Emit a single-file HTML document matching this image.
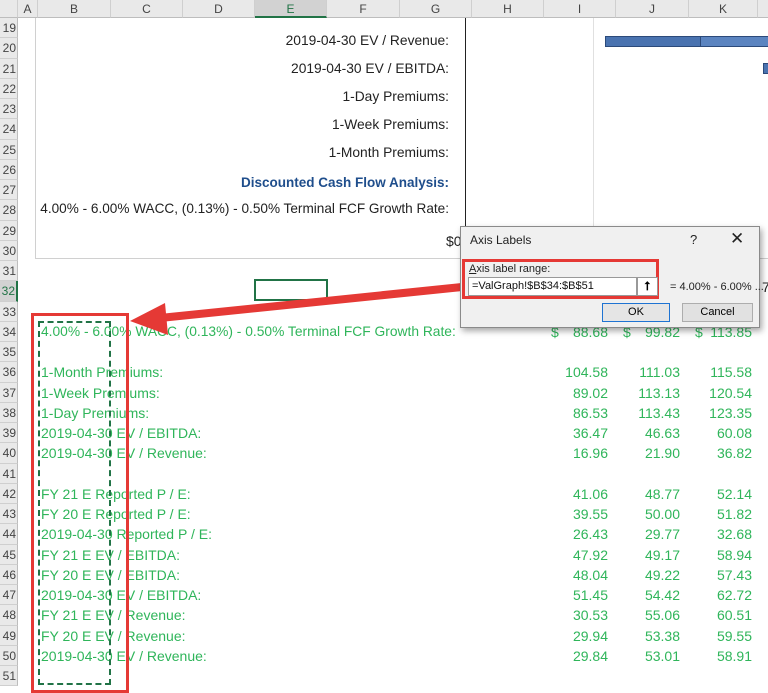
<!DOCTYPE html>
<html><head><style>
*{margin:0;padding:0;box-sizing:border-box}
body{width:768px;height:690px;overflow:hidden;background:#fff;font-family:"Liberation Sans",sans-serif;position:relative}
.a{position:absolute;white-space:nowrap}
.ch{position:absolute;top:0;height:18px;background:#e9e9e9;border-right:1px solid #cfcfcf;border-bottom:1px solid #bdbdbd;font-size:12px;color:#444;text-align:center;line-height:18px}
.rh{position:absolute;left:0;width:18px;background:#e9e9e9;border-bottom:1px solid #cfcfcf;border-right:1px solid #bdbdbd;font-size:12px;color:#444;text-align:right;overflow:hidden;line-height:20px;padding-right:1px}
.lbl{position:absolute;right:319px;font-size:13.8px;color:#222;line-height:16px}
.g{position:absolute;font-size:14px;color:#2fb55a;line-height:20px}
.v{position:absolute;font-size:14px;color:#2fb55a;line-height:20px;text-align:right;width:70px}
</style></head><body>
<div class="ch" style="left:0;width:18px"></div>
<div class="ch" style="left:18px;width:20px">A</div>
<div class="ch" style="left:38px;width:73px">B</div>
<div class="ch" style="left:111px;width:72px">C</div>
<div class="ch" style="left:183px;width:72px">D</div>
<div class="ch" style="left:255px;width:72px;background:#d2d2d2;border-bottom:2px solid #217346;color:#217346">E</div>
<div class="ch" style="left:327px;width:73px">F</div>
<div class="ch" style="left:400px;width:72px">G</div>
<div class="ch" style="left:472px;width:72px">H</div>
<div class="ch" style="left:544px;width:72px">I</div>
<div class="ch" style="left:616px;width:73px">J</div>
<div class="ch" style="left:689px;width:69px">K</div>
<div class="ch" style="left:758px;width:20px"></div>
<div id="rows"></div>
<div class="a" style="left:35px;top:18px;width:733px;height:241px;border-left:1px solid #d0d0d0;border-bottom:1px solid #d0d0d0"></div>
<div class="a" style="left:465px;top:18px;width:1px;height:241px;background:#222"></div>
<div class="a" style="left:593px;top:18px;width:1px;height:241px;background:#e0e0e0"></div>
<div class="a" style="left:605px;top:36px;width:96px;height:11px;background:#4a73b0;border:1px solid #2c4a7a"></div>
<div class="a" style="left:700px;top:36px;width:70px;height:11px;background:#5b84c0;border:1px solid #2c4a7a"></div>
<div class="a" style="left:763px;top:63px;width:8px;height:11px;background:#4a73b0;border:1px solid #2c4a7a"></div>
<div class="lbl" style="top:33px">2019-04-30 EV / Revenue:</div>
<div class="lbl" style="top:61px">2019-04-30 EV / EBITDA:</div>
<div class="lbl" style="top:89px">1-Day Premiums:</div>
<div class="lbl" style="top:117px">1-Week Premiums:</div>
<div class="lbl" style="top:145px">1-Month Premiums:</div>
<div class="lbl" style="top:175px;color:#1f4e8c;font-weight:bold;font-size:13.5px">Discounted Cash Flow Analysis:</div>
<div class="lbl" style="top:201px;font-size:13.6px">4.00% - 6.00% WACC, (0.13%) - 0.50% Terminal FCF Growth Rate:</div>
<div class="a" style="left:446px;top:233px;font-size:14px;color:#222">$0</div>
<div class="a" style="left:254px;top:279px;width:74px;height:22px;border:2px solid #217346"></div>
<div id="gt"></div>
<div class="a" style="left:38px;top:321px;width:73px;height:364px;border:2px dashed #217346"></div>
<div class="a" style="left:31px;top:313px;width:98px;height:380px;border:3px solid #e53935"></div>
<svg class="a" style="left:0;top:0" width="768" height="690"><line x1="462" y1="287" x2="160" y2="318" stroke="#e53935" stroke-width="8"/><polygon points="130,321 165,303 168,335" fill="#e53935"/></svg>
<div class="a" style="left:460px;top:226px;width:300px;height:102px;background:#f0f0f0;border:1px solid #8a8a8a;box-shadow:2px 3px 6px rgba(0,0,0,.35)">
 <div class="a" style="left:9px;top:6px;font-size:12px;color:#222">Axis Labels</div>
 <div class="a" style="left:229px;top:5px;font-size:13px;color:#222">?</div>
 <div class="a" style="left:269px;top:2px;font-size:17px;color:#222">✕</div>
 <div class="a" style="left:1px;top:32px;width:197px;height:40px;border:3px solid #e53935"></div>
 <div class="a" style="left:8px;top:36px;font-size:11px;color:#222"><u>A</u>xis label range:</div>
 <div class="a" style="left:7px;top:50px;width:169px;height:19px;background:#fff;border:1px solid #999;font-size:11px;line-height:17px;padding-left:3px;color:#111">=ValGraph!$B$34:$B$51</div>
 <div class="a" style="left:176px;top:50px;width:21px;height:19px;background:#fff;border:1px solid #999;font-size:12px;text-align:center;line-height:17px;font-weight:bold">⭡</div>
 <div class="a" style="left:209px;top:54px;font-size:11px;color:#222">= 4.00% - 6.00% ...</div>
 <div class="a" style="left:141px;top:76px;width:68px;height:19px;background:#e5e5e5;border:1px solid #1e73d2;font-size:11px;text-align:center;line-height:17px">OK</div>
 <div class="a" style="left:221px;top:76px;width:71px;height:19px;background:#e1e1e1;border:1px solid #adadad;font-size:11px;text-align:center;line-height:17px">Cancel</div>
</div>
<div class="a" style="left:762px;top:279px;font-size:14px;color:#222">7</div>
<script>
var r=document.getElementById('rows'),h='';
for(var n=19;n<=51;n++){var t=18+(n-19)*20.25;h+='<div class="rh" style="top:'+t+'px;height:20.25px'+(n==32?';background:#d2d2d2;border-right:2px solid #217346;color:#217346':'')+'">'+n+'</div>';}
r.innerHTML=h;
var d=[[34,'4.00% - 6.00% WACC, (0.13%) - 0.50% Terminal FCF Growth Rate:',['88.68','99.82','113.85'],1],
[36,'1-Month Premiums:',['104.58','111.03','115.58']],[37,'1-Week Premiums:',['89.02','113.13','120.54']],
[38,'1-Day Premiums:',['86.53','113.43','123.35']],[39,'2019-04-30 EV / EBITDA:',['36.47','46.63','60.08']],
[40,'2019-04-30 EV / Revenue:',['16.96','21.90','36.82']],[42,'FY 21 E Reported P / E:',['41.06','48.77','52.14']],
[43,'FY 20 E Reported P / E:',['39.55','50.00','51.82']],[44,'2019-04-30 Reported P / E:',['26.43','29.77','32.68']],
[45,'FY 21 E EV / EBITDA:',['47.92','49.17','58.94']],[46,'FY 20 E EV / EBITDA:',['48.04','49.22','57.43']],
[47,'2019-04-30 EV / EBITDA:',['51.45','54.42','62.72']],[48,'FY 21 E EV / Revenue:',['30.53','55.06','60.51']],
[49,'FY 20 E EV / Revenue:',['29.94','53.38','59.55']],[50,'2019-04-30 EV / Revenue:',['29.84','53.01','58.91']]];
var g='',R=[608,680,752];
d.forEach(function(x){var t=18+(x[0]-19)*20.25;g+='<div class="g" style="left:41px;top:'+t+'px'+(x[3]?';font-size:13.8px':'')+'">'+x[1]+'</div>';
x[2].forEach(function(v,i){g+='<div class="v" style="left:'+(R[i]-70)+'px;top:'+t+'px">'+v+'</div>';if(x[3])g+='<div class="g" style="left:'+(R[i]-57)+'px;top:'+t+'px">$</div>';});});
document.getElementById('gt').innerHTML=g;
</script>
</body></html>
